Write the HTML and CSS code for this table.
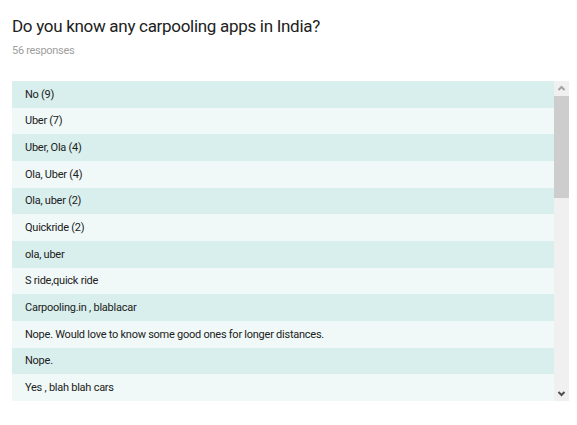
FILE: index.html
```html
<!DOCTYPE html>
<html>
<head>
<meta charset="utf-8">
<link rel="stylesheet" href="styles.css">
</head>
<body>
<div class="card">
  <h1 class="title">Do you know any carpooling apps in India?</h1>
  <div class="count">56 responses</div>
  <div class="list-wrap">
    <div class="list">
      <div class="row">No (9)</div>
      <div class="row">Uber (7)</div>
      <div class="row">Uber, Ola (4)</div>
      <div class="row">Ola, Uber (4)</div>
      <div class="row">Ola, uber (2)</div>
      <div class="row">Quickride (2)</div>
      <div class="row">ola, uber</div>
      <div class="row">S ride,quick ride</div>
      <div class="row">Carpooling.in , blablacar</div>
      <div class="row">Nope. Would love to know some good ones for longer distances.</div>
      <div class="row">Nope.</div>
      <div class="row">Yes , blah blah cars</div>
    </div>
    <div class="scrollbar">
      <div class="arrow">
        <svg width="15" height="15" viewBox="0 0 15 15"><path d="M4.5 9 L7.5 6 L10.5 9" fill="none" stroke="#a3a3a3" stroke-width="2"/></svg>
      </div>
      <div class="track"><div class="thumb"></div></div>
      <div class="arrow">
        <svg width="15" height="15" viewBox="0 0 15 15"><path d="M4.5 6 L7.5 9 L10.5 6" fill="none" stroke="#505050" stroke-width="2"/></svg>
      </div>
    </div>
  </div>
</div>
</body>
</html>
```
FILE: styles.css
```css
html, body {
  margin: 0;
  padding: 0;
  background: #ffffff;
}
.card {
  padding: 14px 8px 0 12px;
  font-family: Roboto, "Liberation Sans", Arial, sans-serif;
}
.title {
  margin: 0;
  font-size: 17px;
  letter-spacing: -0.3px;
  font-weight: 400;
  line-height: 24px;
  color: #212121;
}
.count {
  margin-top: 6px;
  font-size: 11px;
  letter-spacing: -0.3px;
  line-height: 14px;
  color: #9e9e9e;
}
.list-wrap {
  margin-top: 23px;
  display: flex;
  height: 320px;
}
.list {
  flex: 1;
  overflow: hidden;
}
.row {
  height: 26.67px;
  box-sizing: border-box;
  padding-left: 13px;
  display: flex;
  align-items: center;
  font-size: 11px;
  letter-spacing: -0.25px;
  color: #212121;
}
.row:nth-child(odd) {
  background: #d9efed;
}
.row:nth-child(even) {
  background: #f0f9f8;
}
.scrollbar {
  width: 15px;
  background: #f0f0f0;
  display: flex;
  flex-direction: column;
}
.arrow {
  height: 15px;
}
.arrow svg {
  display: block;
}
.track {
  flex: 1;
  position: relative;
}
.thumb {
  height: 102px;
  background: #cdcdcd;
}
```
